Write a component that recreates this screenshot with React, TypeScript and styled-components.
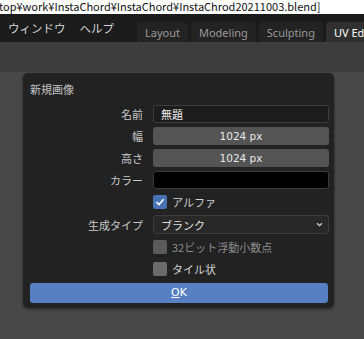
import styled, { createGlobalStyle } from "styled-components";

const GlobalStyle = createGlobalStyle`
  html, body {
    margin: 0;
    padding: 0;
    background: #484848;
    overflow: hidden;
  }
  * { box-sizing: border-box; }
`;

const Screen = styled.div`
  position: relative;
  width: 364px;
  height: 339px;
  display: flex;
  flex-direction: column;
  font-family: "DejaVu Sans", "Noto Sans CJK JP", sans-serif;
  background: #484848;
`;

const TitleStrip = styled.div`
  height: 14px;
  background: #ffffff;
  color: #111;
  font-family: "Noto Sans CJK JP", sans-serif;
  font-size: 11px;
  line-height: 13px;
  white-space: nowrap;
  overflow: hidden;
  text-indent: -1px;
`;

const TopBar = styled.div`
  height: 28px;
  background: #1b1b1b;
  display: flex;
  align-items: flex-end;
  padding-left: 8px;
  white-space: nowrap;
  overflow: hidden;
`;

const Menu = styled.div`
  display: flex;
  flex-shrink: 0;
  gap: 14px;
  height: 100%;
  align-items: center;
  color: #d6d6d6;
  font-family: "Noto Sans CJK JP", sans-serif;
  font-size: 11.5px;
  margin-right: 23px;
`;

const Tabs = styled.div`
  display: flex;
  flex-shrink: 0;
  gap: 3px;
  height: 20px;
`;

const Tab = styled.div<{ $active?: boolean }>`
  padding: 0 8px;
  display: flex;
  align-items: center;
  border-radius: 4px 4px 0 0;
  background: ${(p) => (p.$active ? "#303030" : "#232323")};
  color: ${(p) => (p.$active ? "#ffffff" : "#9a9a9a")};
  font-family: "Noto Sans", sans-serif;
  font-size: 11px;
`;

const EditorHeader = styled.div`
  height: 30px;
  background: #3d3d3d;
`;

const EditorToolbar = styled.div`
  height: 28px;
  display: flex;
  align-items: center;
  gap: 9px;
  padding-left: 126px;
`;

const GhostIcon = styled.div<{ $w: number }>`
  width: ${(p) => p.$w}px;
  height: 12px;
  border-radius: 2px;
  background: #6a6a6a;
`;

const EditorBody = styled.div`
  flex: 1;
  background: #484848;
`;

const Dialog = styled.div`
  position: absolute;
  left: 23px;
  top: 73px;
  width: 311px;
  height: 235px;
  background: rgba(32, 32, 32, 0.96);
  border-radius: 5px;
  box-shadow: 0 1px 3px rgba(0, 0, 0, 0.5);
  padding: 8px 5px 0 7px;
  display: flex;
  flex-direction: column;
  font-family: "Noto Sans CJK JP", sans-serif;
  font-size: 11px;
  color: #d0d0d0;
`;

const DialogTitle = styled.div`
  height: 17px;
  line-height: 17px;
  color: #c4c4c4;
  margin-bottom: 7px;
`;

const Form = styled.div`
  display: grid;
  grid-template-columns: 113px 176px;
  column-gap: 10px;
  row-gap: 4px;
  align-items: center;
`;

const Label = styled.div`
  text-align: right;
  color: #c8c8c8;
  line-height: 18px;
`;

const TextField = styled.div`
  height: 18px;
  background: #1c1c1c;
  border: 1px solid #3d3d3d;
  border-radius: 3px;
  color: #f0f0f0;
  padding-left: 7px;
  line-height: 16px;
`;

const NumberField = styled.div`
  height: 18px;
  background: #545454;
  border-radius: 3px;
  color: #e8e8e8;
  text-align: center;
  line-height: 18px;
  font-family: "DejaVu Sans", sans-serif;
  font-size: 10.5px;
`;

const ColorField = styled.div`
  height: 18px;
  background: #000;
  border: 1px solid #3a3a3a;
  border-radius: 3px;
`;

const Spacer = styled.div``;

const CheckRow = styled.div`
  display: flex;
  align-items: center;
  gap: 5px;
  height: 18px;
`;

const Box = styled.div<{ $checked?: boolean; $dim?: boolean }>`
  width: 14px;
  height: 14px;
  border-radius: 2px;
  background: ${(p) => (p.$checked ? "#4772b3" : p.$dim ? "#5a5a5a" : "#6a6a6a")};
  display: flex;
  align-items: center;
  justify-content: center;
`;

const CheckText = styled.span<{ $dim?: boolean }>`
  color: ${(p) => (p.$dim ? "#8c8c8c" : "#d2d2d2")};
`;

const Select = styled.div`
  height: 19px;
  background: #282828;
  border: 1px solid #3d3d3d;
  border-radius: 3px;
  display: flex;
  align-items: center;
  justify-content: space-between;
  padding: 0 4px 0 7px;
  color: #e0e0e0;
`;

const OkButton = styled.div`
  margin-top: 5px;
  height: 20px;
  width: 298px;
  background: #5680c2;
  border-radius: 3px;
  color: #ffffff;
  text-align: center;
  line-height: 20px;
  font-family: "DejaVu Sans", sans-serif;
  font-size: 11px;
`;

const Underlined = styled.span`
  text-decoration: underline;
`;

export default function App() {
  return (
    <>
      <GlobalStyle />
      <Screen>
        <TitleStrip>top¥work¥InstaChord¥InstaChord¥InstaChrod20211003.blend]</TitleStrip>
        <TopBar>
          <Menu>
            <span>ウィンドウ</span>
            <span>ヘルプ</span>
          </Menu>
          <Tabs>
            <Tab>Layout</Tab>
            <Tab>Modeling</Tab>
            <Tab>Sculpting</Tab>
            <Tab $active>UV Editing</Tab>
          </Tabs>
        </TopBar>
        <EditorHeader />
        <EditorToolbar>
          <GhostIcon $w={22} />
          <GhostIcon $w={8} />
          <GhostIcon $w={8} />
          <GhostIcon $w={20} />
          <GhostIcon $w={24} />
          <GhostIcon $w={10} />
        </EditorToolbar>
        <EditorBody />
        <Dialog>
          <DialogTitle>新規画像</DialogTitle>
          <Form>
            <Label>名前</Label>
            <TextField>無題</TextField>
            <Label>幅</Label>
            <NumberField>1024 px</NumberField>
            <Label>高さ</Label>
            <NumberField>1024 px</NumberField>
            <Label>カラー</Label>
            <ColorField />
            <Spacer />
            <CheckRow>
              <Box $checked>
                <svg width="10" height="10" viewBox="0 0 10 10">
                  <path d="M1.5 5.2 L4 7.6 L8.6 2.2" fill="none" stroke="#fff" strokeWidth="1.6" />
                </svg>
              </Box>
              <CheckText>アルファ</CheckText>
            </CheckRow>
            <Label>生成タイプ</Label>
            <Select>
              <span>ブランク</span>
              <svg width="9" height="9" viewBox="0 0 9 9">
                <path d="M2 3.2 L4.5 5.7 L7 3.2" fill="none" stroke="#cfcfcf" strokeWidth="1.3" />
              </svg>
            </Select>
            <Spacer />
            <CheckRow>
              <Box $dim />
              <CheckText $dim>32ビット浮動小数点</CheckText>
            </CheckRow>
            <Spacer />
            <CheckRow>
              <Box />
              <CheckText>タイル状</CheckText>
            </CheckRow>
          </Form>
          <OkButton>
            <Underlined>O</Underlined>K
          </OkButton>
        </Dialog>
      </Screen>
    </>
  );
}
